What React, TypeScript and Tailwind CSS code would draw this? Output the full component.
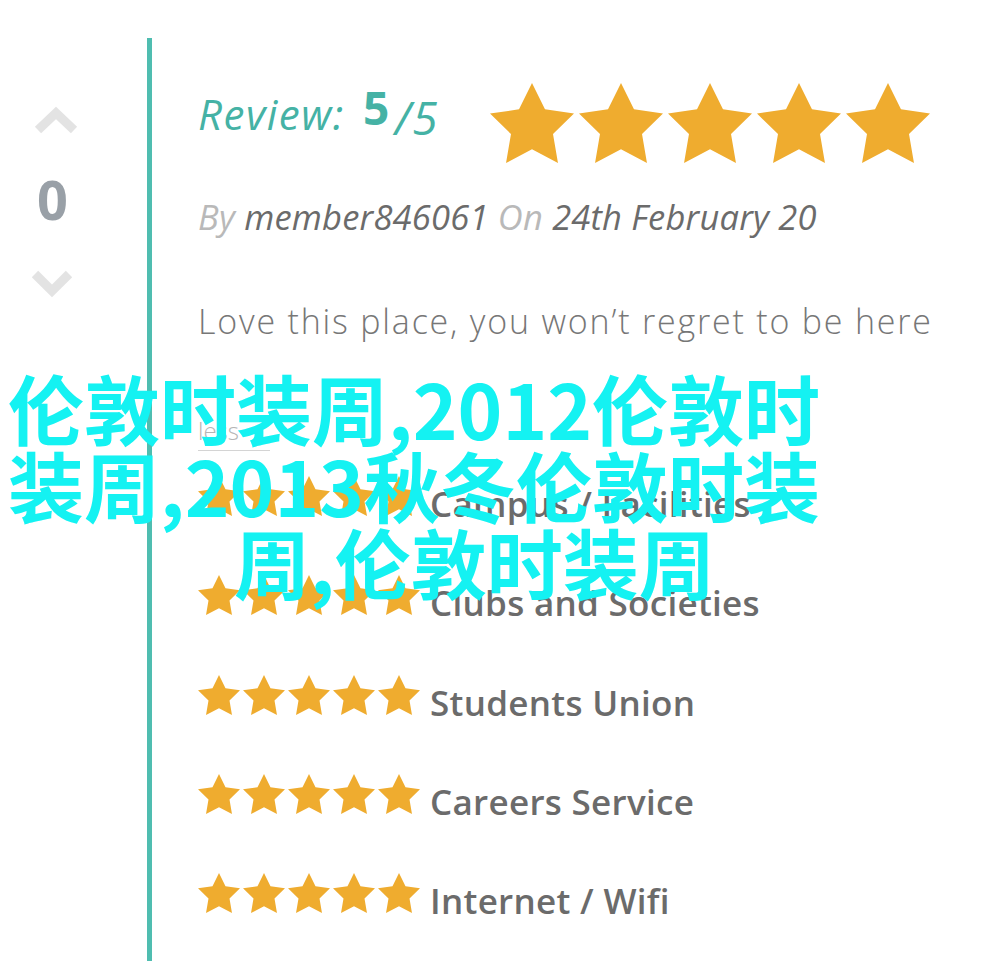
const STAR_POINTS =
    "50,0 64.69,29.77 97.55,34.55 73.78,57.73 79.39,90.45 50,75 20.61,90.45 26.22,57.73 2.45,34.55 35.31,29.77";

const Star = ({className}: {className: string}) => (
    <svg viewBox="2.45 0 95.1 90.45" className={className} preserveAspectRatio="none">
        <polygon points={STAR_POINTS} fill="#efac2f" />
    </svg>
);

const ratings = [
    "Campus / Facilities",
    "Clubs and Societies",
    "Students Union",
    "Careers Service",
    "Internet / Wifi",
];

const App = () => {
    return (
        <div className="relative w-[990px] h-[961px] overflow-hidden bg-white font-['Open_Sans',sans-serif]">
            <div className="flex pt-[38px]">
                {/* vote column */}
                <div className="w-[147px] shrink-0 flex flex-col">
                    <svg width="44" height="30" viewBox="0 0 44 30" className="mt-[67px] ml-[34px]">
                        <path d="M4 25 L22 8 L40 25" fill="none" stroke="#e3e3e3" strokeWidth="9" />
                    </svg>
                    <div className="mt-[37px] ml-[37px] text-[54px] leading-[54px] font-bold text-[#99a0a7]">0</div>
                    <svg width="42" height="30" viewBox="0 0 42 30" className="mt-[43px] ml-[31px]">
                        <path d="M4 5 L21 22 L38 5" fill="none" stroke="#e3e3e3" strokeWidth="9" />
                    </svg>
                </div>

                {/* review */}
                <div className="flex-1 min-h-[923px] border-l-[5px] border-[#4fbdb0] pl-[46px] flex flex-col">
                    <div className="mt-[45px] h-[80px] flex">
                        <div className="w-[292px] shrink-0 pt-[11px] text-[42px] leading-[40px] italic tracking-[1.5px] text-[#45b2a5] whitespace-nowrap">
                            Review:
                            <span className="ml-[18px] not-italic font-bold text-[46px] leading-[0] align-[5px]">5</span>
                            <span className="ml-[4px] text-[46px] leading-[0] align-[-5px]">/5</span>
                        </div>
                        <div className="flex gap-[5px]">
                            {[0, 1, 2, 3, 4].map((i) => (
                                <Star key={i} className="w-[84px] h-[80px]" />
                            ))}
                        </div>
                    </div>

                    <div className="mt-[37px] text-[34.5px] leading-[34px] italic tracking-[0.2px] text-[#6b6b6b] whitespace-nowrap">
                        <span className="text-[#b9b9b9]">By</span> member846061{" "}
                        <span className="text-[#b9b9b9]">On</span> 24th February 20
                    </div>

                    <div className="mt-[71px] text-[34px] leading-[33px] font-light tracking-[1.8px] text-[#777777] whitespace-nowrap">
                        Love this place, you won’t regret to be here
                    </div>

                    <div className="mt-[81px] w-[72px] pb-[7px] border-b-[1.5px] border-[#d4d4d4] text-[24px] leading-[24px] font-light text-[#b5b5b5]">
                        less
                    </div>

                    <div className="flex flex-col">
                        {ratings.map((label) => (
                            <div key={label} className="h-[99.3px] flex items-start">
                                <div className="mt-[25px] flex gap-[3px]">
                                    {[0, 1, 2, 3, 4].map((i) => (
                                        <Star key={i} className="w-[42px] h-[40px]" />
                                    ))}
                                </div>
                                <div className="mt-[36px] ml-[10px] text-[35px] leading-[34px] font-semibold tracking-[0.3px] text-[#6b6b6b] whitespace-nowrap">
                                    {label}
                                </div>
                            </div>
                        ))}
                    </div>
                </div>
            </div>

            {/* title overlay */}
            <div className="absolute left-[8px] top-[369px] text-[76px] leading-[77px] font-bold text-[#14f2f2] font-['Noto_Sans_CJK_SC',sans-serif] whitespace-nowrap">
                <div>伦敦时装周,2012伦敦时</div>
                <div>装周,2013秋冬伦敦时装</div>
                <div className="pl-[226px]">周,伦敦时装周</div>
            </div>
        </div>
    );
};

export default App;
